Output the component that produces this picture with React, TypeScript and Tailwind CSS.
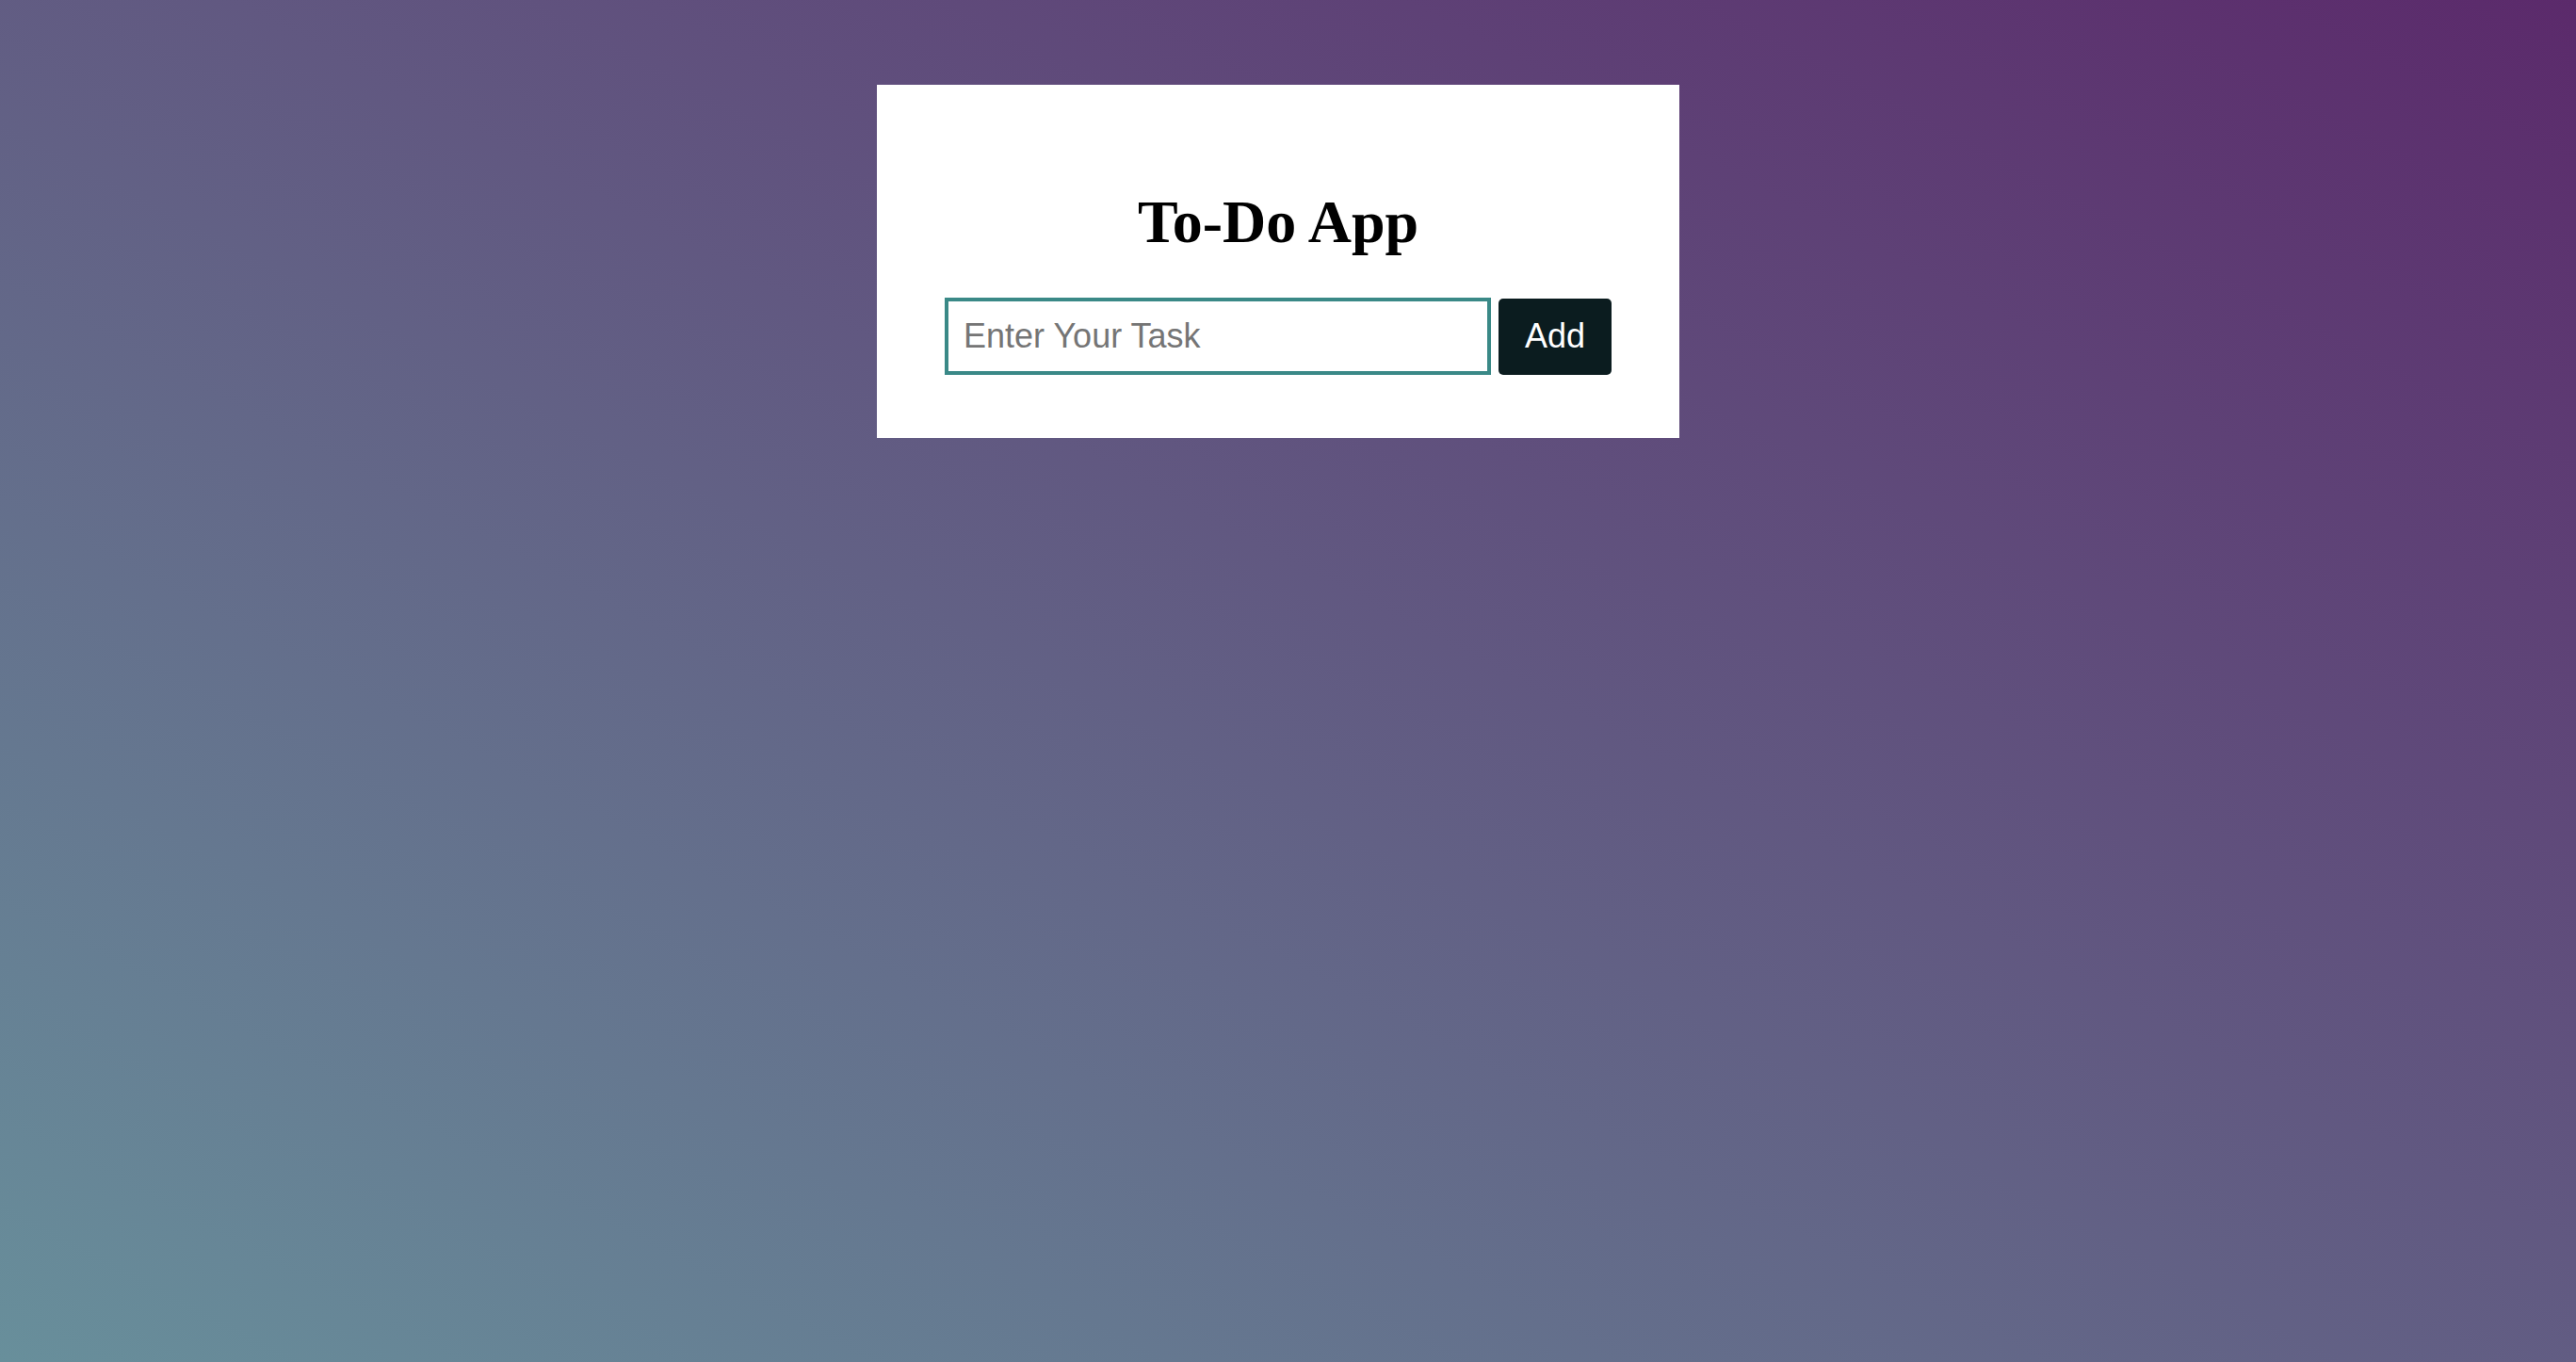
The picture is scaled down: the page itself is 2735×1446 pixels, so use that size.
import React, { useState } from 'react';

export default function App() {
  const [task, setTask] = useState('');
  const [tasks, setTasks] = useState<string[]>([]);

  const addTask = () => {
    if (!task.trim()) return;
    setTasks([...tasks, task.trim()]);
    setTask('');
  };

  return (
    <div className="min-h-screen w-full bg-[linear-gradient(to_top_right,#688f9b,#5b2a6b)] pt-[90px] pr-[21px]">
      {/* Card */}
      <div className="mx-auto w-[852px] bg-white px-[72px] pt-[109px] pb-[67px]">
        <h1 className="text-center font-['Liberation_Serif',serif] text-[64px] font-bold leading-[74px] text-black">
          To-Do App
        </h1>

        <div className="mt-[43px] flex items-center gap-2">
          <input
            type="text"
            value={task}
            onChange={(e) => setTask(e.target.value)}
            onKeyDown={(e) => e.key === 'Enter' && addTask()}
            placeholder="Enter Your Task"
            className="h-[82px] w-[580px] border-4 border-[#3a8987] px-4 py-4 font-['Liberation_Sans',Arial,sans-serif] text-[36px] leading-normal text-black outline-none placeholder:text-[#757575]"
          />
          <button
            onClick={addTask}
            className="h-[81px] w-[120px] rounded-[5px] bg-[#0b1c1f] font-['Liberation_Sans',Arial,sans-serif] text-[36px] leading-normal text-white"
          >
            Add
          </button>
        </div>

        {tasks.length > 0 && (
          <ul className="mt-6 font-['Liberation_Sans',Arial,sans-serif] text-[32px]">
            {tasks.map((t, i) => (
              <li key={i} className="py-2">
                {t}
              </li>
            ))}
          </ul>
        )}
      </div>
    </div>
  );
}
